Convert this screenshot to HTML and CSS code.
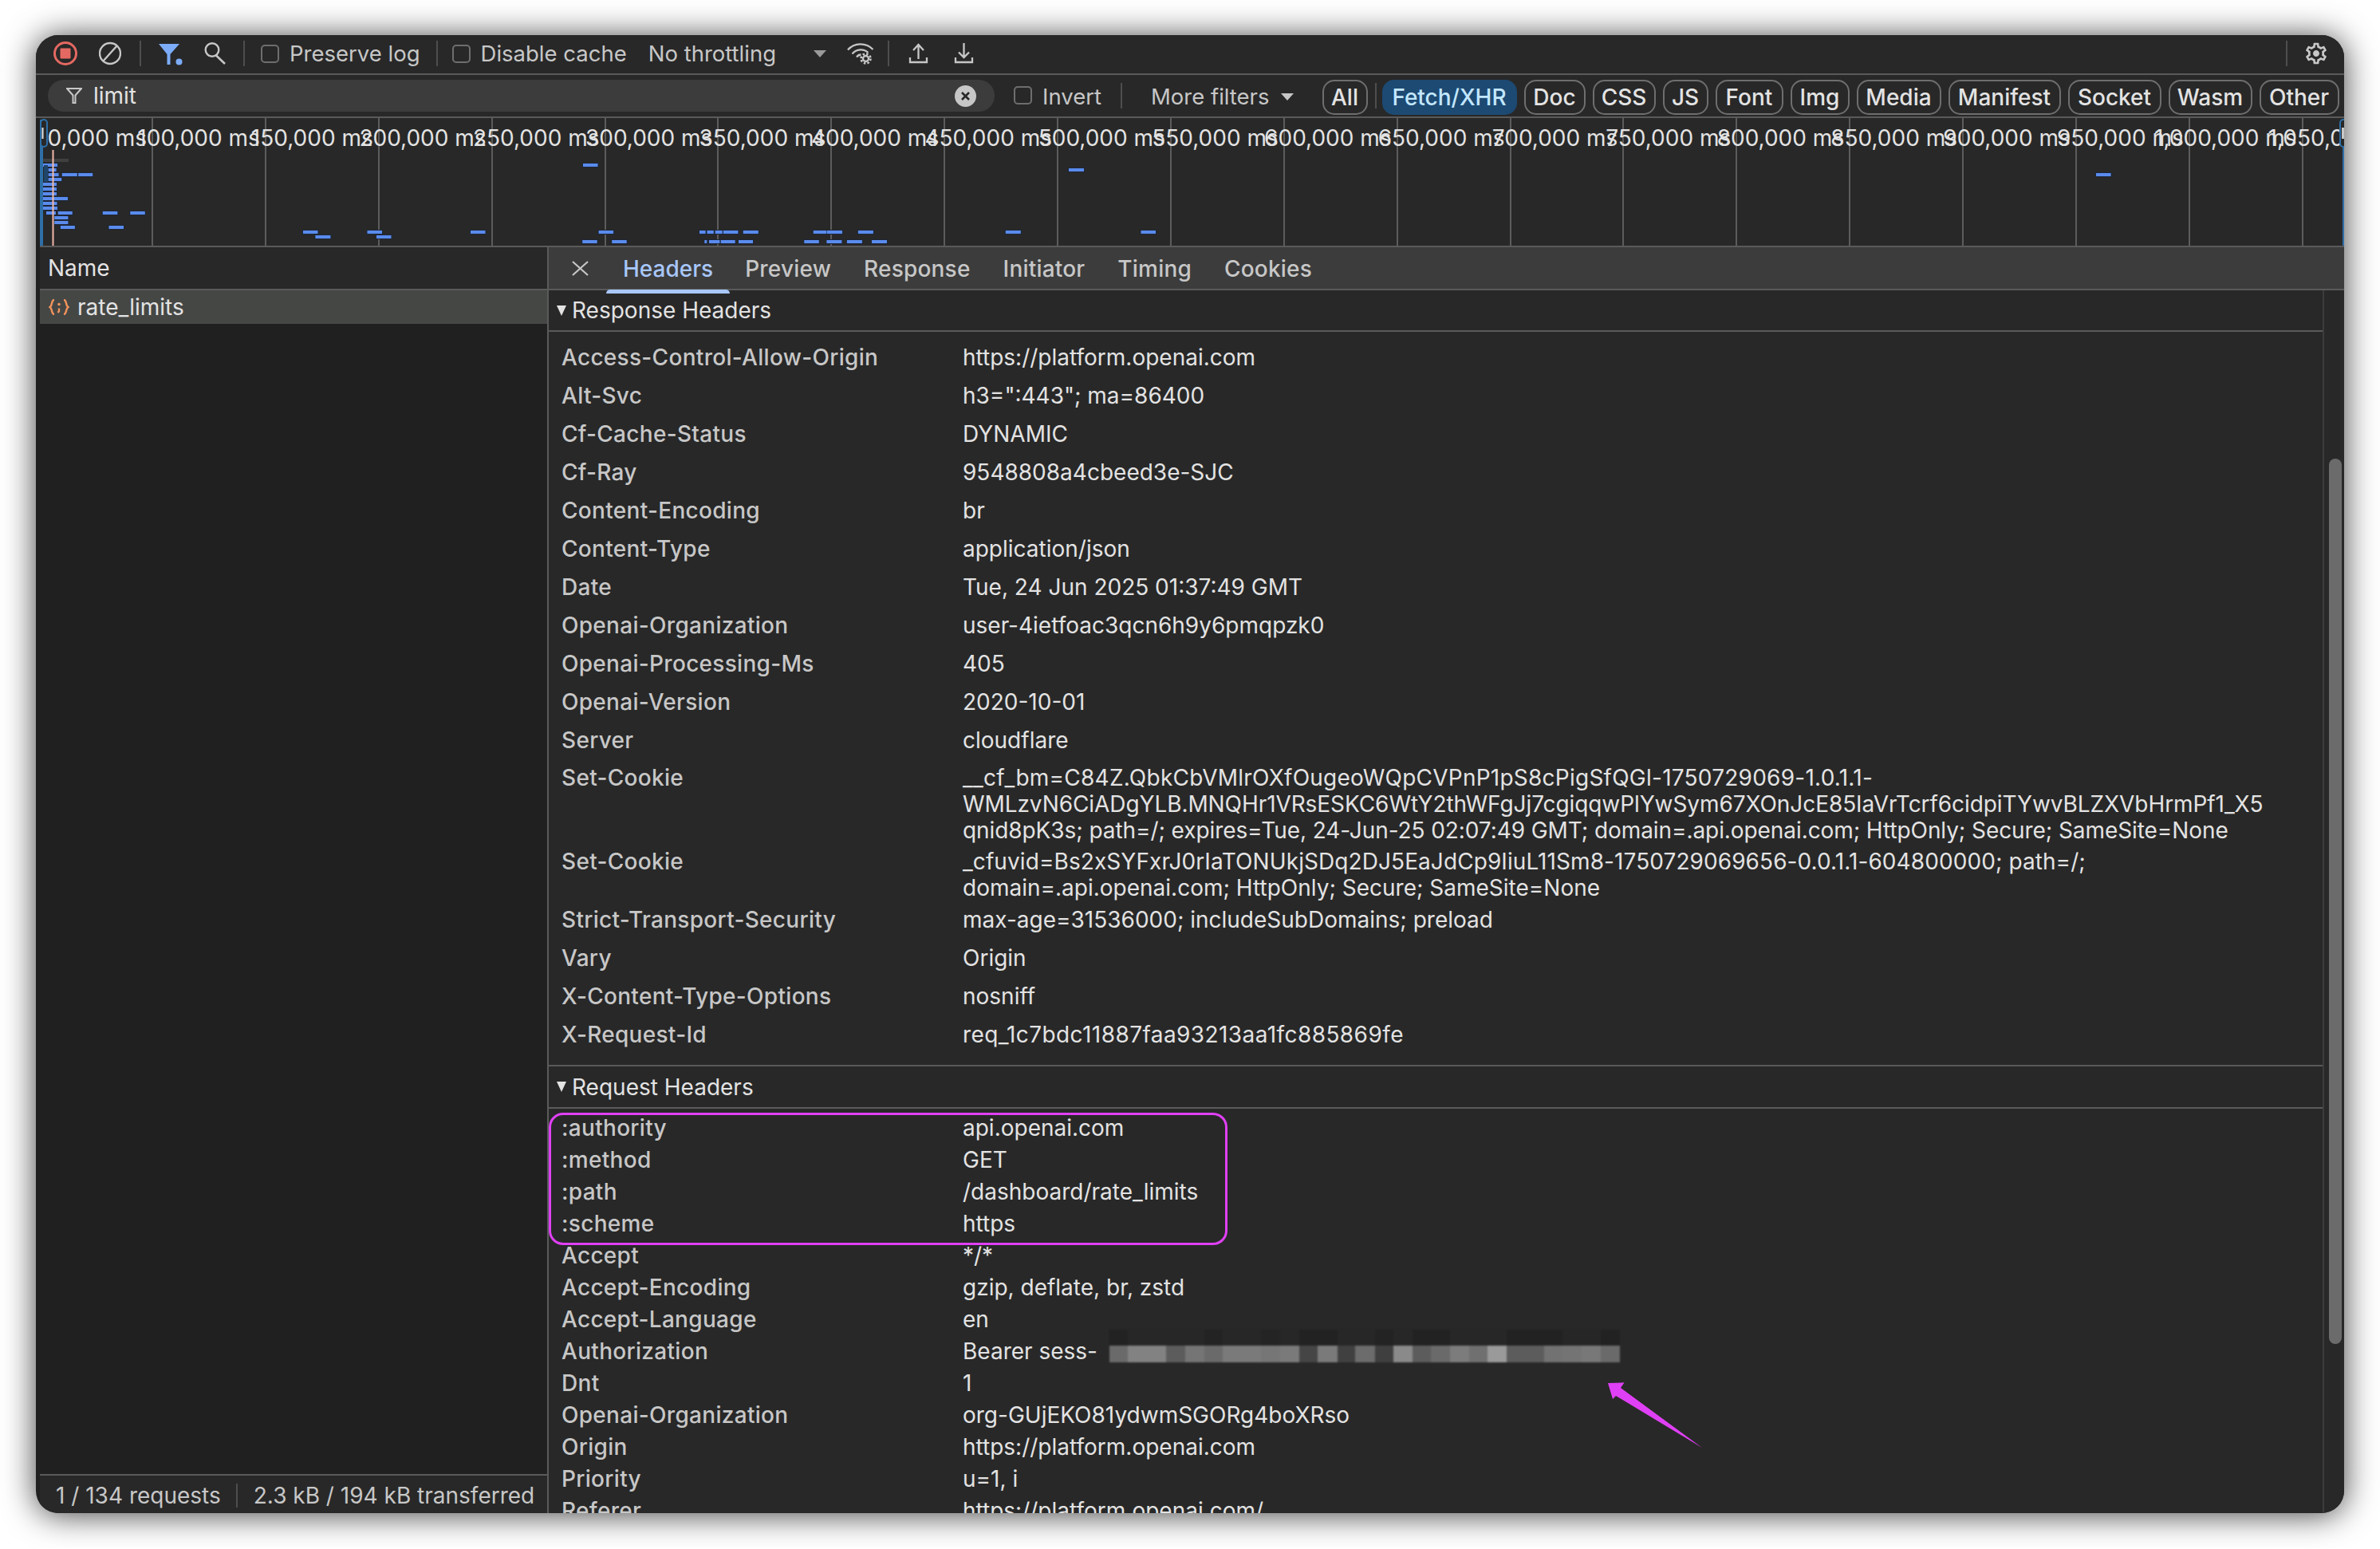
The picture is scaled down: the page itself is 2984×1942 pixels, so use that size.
FILE: index.html
```html
<!DOCTYPE html>
<html lang="en">
<head>
<meta charset="utf-8">
<title>Network</title>
<link rel="stylesheet" href="styles.css">
</head>
<body>
<div class="window">
  <div class="toolbar">
    <svg class="ic record" width="30" height="30" viewBox="0 0 30 30"><circle cx="15" cy="15" r="13.5" fill="none" stroke="#e46962" stroke-width="3"/><rect x="8.5" y="8.5" width="13" height="13" rx="1" fill="#e46962"/></svg>
    <svg class="ic clear" width="28" height="30" viewBox="0 0 28 30"><circle cx="14" cy="15" r="13" fill="none" stroke="#c7c7c7" stroke-width="2.4"/><path d="M5 25 L23 5" stroke="#c7c7c7" stroke-width="2.4"/></svg>
    <span class="sep sep-a"></span>
    <svg class="ic funnel" width="30" height="28" viewBox="0 0 30 28"><path d="M0 0H26L14.5 13V26H10.5V13Z" fill="#7cacf8"/><circle cx="25.5" cy="22.5" r="4" fill="#7cacf8"/></svg>
    <svg class="ic search" width="28" height="28" viewBox="0 0 28 28"><circle cx="11" cy="9.5" r="8.3" fill="none" stroke="#c7c7c7" stroke-width="2.4"/><path d="M16 16.5 L27 27" stroke="#c7c7c7" stroke-width="2.6"/></svg>
    <span class="sep sep-b"></span>
    <span class="check c1"></span><span class="lbl l-preserve">Preserve log</span>
    <span class="sep sep-c"></span>
    <span class="check c1"></span><span class="lbl l-disable">Disable cache</span>
    <span class="lbl l-throttle">No throttling</span>
    <span class="tri t-throttle"></span>
    <svg class="ic wifi" width="34" height="28" viewBox="0 0 34 28"><g fill="none" stroke="#c7c7c7" stroke-width="2.3"><path d="M1 9.5C9 0 24 0 32.500 9"/><path d="M6.500 14.500C12 8 21 8 26.500 13"/><path d="M12 18.500C13.500 16.500 15.500 15.500 17.500 15.500"/><circle cx="23.500" cy="20.500" r="3.500"/><circle cx="23.500" cy="20.500" r="6" stroke-width="2.6" stroke-dasharray="2.500 2.200"/></g></svg>
    <span class="sep sep-d"></span>
    <svg class="ic upload" width="25" height="26" viewBox="0 0 25 26"><path d="M12.500 20V2M6 9L12.500 2L19 9M2 18V24H23V18" fill="none" stroke="#c7c7c7" stroke-width="2.3"/></svg>
    <svg class="ic download" width="25" height="26" viewBox="0 0 25 26"><path d="M12.500 0V18M6 11.500L12.500 18L19 11.500M2 18V24H23V18" fill="none" stroke="#c7c7c7" stroke-width="2.3"/></svg>
    <span class="grow"></span>
    <span class="sep sep-e"></span>
    <svg class="ic settings" width="32" height="32" viewBox="0 0 24 24"><path fill="#c7c7c7" d="M19.430 12.980c.04-.32.07-.64.07-.98 0-.34-.03-.66-.07-.98l2.110-1.650c.19-.15.24-.42.12-.64l-2-3.460c-.09-.16-.26-.25-.44-.25-.06 0-.12.01-.17.03l-2.490 1c-.52-.4-1.080-.73-1.690-.98l-.38-2.650C14.460 2.180 14.250 2 14 2h-4c-.25 0-.46.18-.49.42l-.38 2.650c-.61.25-1.170.59-1.690.98l-2.490-1c-.06-.02-.12-.03-.18-.03-.17 0-.34.09-.43.25l-2 3.460c-.13.22-.07.49.12.64l2.110 1.650c-.04.32-.07.65-.07.98 0 .33.03.66.07.98l-2.110 1.650c-.19.15-.24.42-.12.64l2 3.460c.09.16.26.25.44.25.06 0 .12-.01.17-.03l2.490-1c.52.4 1.080.73 1.690.98l.38 2.650c.03.24.24.42.49.42h4c.25 0 .46-.18.49-.42l.38-2.650c.61-.25 1.170-.59 1.690-.98l2.490 1c.06.02.12.03.18.03.17 0 .34-.09.43-.25l2-3.460c.12-.22.07-.49-.12-.64l-2.110-1.650zm-1.980-1.710c.04.31.05.52.05.73 0 .21-.02.43-.05.73l-.14 1.130.89.7 1.080.84-.7 1.210-1.270-.51-1.040-.42-.9.68c-.43.32-.84.56-1.250.73l-1.060.43-.16 1.130-.2 1.350h-1.400l-.19-1.350-.16-1.130-1.060-.43c-.43-.18-.83-.41-1.230-.71l-.91-.7-1.060.43-1.270.51-.7-1.210 1.080-.84.89-.7-.14-1.130c-.03-.31-.05-.54-.05-.74s.02-.43.05-.73l.14-1.130-.89-.7-1.080-.84.7-1.210 1.270.51 1.040.42.9-.68c.43-.32.84-.56 1.250-.73l1.060-.43.16-1.130.2-1.350h1.390l.19 1.350.16 1.130 1.060.43c.43.18.83.41 1.230.71l.91.7 1.060-.43 1.270-.51.7 1.210-1.070.85-.89.7.14 1.130zM12 9c-1.660 0-3 1.340-3 3s1.340 3 3 3 3-1.340 3-3-1.340-3-3-3z"/></svg>
  </div>

  <div class="filterbar">
    <div class="filterinput">
      <svg class="ic" width="20" height="20" viewBox="0 0 20 20"><path d="M1 1H19L11.500 9.500V19H8.500V9.500Z" fill="none" stroke="#c7c7c7" stroke-width="2"/></svg>
      <span class="query">limit</span>
      <span class="grow"></span>
      <svg class="ic" width="27" height="27" viewBox="0 0 27 27"><circle cx="13.500" cy="13.500" r="13.500" fill="#c7c7c7"/><path d="M9 9L18 18M18 9L9 18" stroke="#282828" stroke-width="2.600"/></svg>
    </div>
    <span class="check c2"></span><span class="lbl l-invert">Invert</span>
    <span class="sep sep-f"></span>
    <span class="lbl l-more">More filters</span>
    <span class="tri t-more"></span>
    <span class="pill p-all">All</span>
    <span class="sep sep-g"></span>
    <span class="pill active p-fetch">Fetch/XHR</span>
    <span class="pill p-doc">Doc</span>
    <span class="pill p-css">CSS</span>
    <span class="pill p-js">JS</span>
    <span class="pill p-font">Font</span>
    <span class="pill p-img">Img</span>
    <span class="pill p-media">Media</span>
    <span class="pill p-manifest">Manifest</span>
    <span class="pill p-socket">Socket</span>
    <span class="pill p-wasm">Wasm</span>
    <span class="pill p-other">Other</span>
  </div>

  <div class="timeline">
    <div class="ticks">
      <div class="tick first"><span>50,000 ms</span></div>
      <div class="tick"><span>100,000 ms</span></div>
      <div class="tick"><span>150,000 ms</span></div>
      <div class="tick"><span>200,000 ms</span></div>
      <div class="tick"><span>250,000 ms</span></div>
      <div class="tick"><span>300,000 ms</span></div>
      <div class="tick"><span>350,000 ms</span></div>
      <div class="tick"><span>400,000 ms</span></div>
      <div class="tick"><span>450,000 ms</span></div>
      <div class="tick"><span>500,000 ms</span></div>
      <div class="tick"><span>550,000 ms</span></div>
      <div class="tick"><span>600,000 ms</span></div>
      <div class="tick"><span>650,000 ms</span></div>
      <div class="tick"><span>700,000 ms</span></div>
      <div class="tick"><span>750,000 ms</span></div>
      <div class="tick"><span>800,000 ms</span></div>
      <div class="tick"><span>850,000 ms</span></div>
      <div class="tick"><span>900,000 ms</span></div>
      <div class="tick"><span>950,000 ms</span></div>
      <div class="tick"><span>1,000,000 ms</span></div>
      <div class="tick"><span>1,050,000 ms</span></div>
    </div>
    <svg class="overview" width="2889" height="160" viewBox="50 148 2889 160">
      <rect x="54" y="199" width="32" height="4" fill="#404040"/>
      <g fill="#5a8bed" stroke="#1d2636" stroke-width="2" paint-order="stroke">
        <path d="M54 205h18v4h-18zM731 205h18.500v4h-18.500zM60.600 211h10v4h-10zM1340 211h19v4h-19zM60.600 217h13v4h-13zM77.800 217h19v4h-19zM98.200 217h18v4h-18zM2628 217h18.600v4h-18.600zM60.600 223h16.600v4h-16.600zM54 229h17v4h-17zM54 235h17v4h-17zM54 241h17v4h-17zM54 247h31v4h-31zM54 253h17.500v4h-17.500zM54 259h18v4h-18z"/>
        <path d="M58 265h12v4h-12zM72.700 265h18v4h-18zM128.800 265h18.500v4h-18.500zM163.300 265h18.500v4h-18.500zM68.200 271h17.200v4h-17.200zM68.200 277h17.200v4h-17.200zM75.900 283h18v4h-18zM136.500 283h18.500v4h-18.500z"/>
        <path d="M380 289h18.500v4h-18.500zM460.500 289h18.500v4h-18.500zM590 289h18.500v4h-18.500zM750.600 289h18.500v4h-18.500zM877 289h7.600v4h-7.600zM886.500 289h8.300v4h-8.300zM896.700 289h9v4h-9zM906.900 289h18.500v4h-18.500zM931.800 289h19v4h-19zM1019.800 289h16.600v4h-16.600zM1037 289h19v4h-19zM1075.900 289h19v4h-19zM1260.800 289h19v4h-19zM1430.500 289h18.500v4h-18.500z"/>
        <path d="M395.400 295h19v4h-19zM472 295h18.500v4h-18.500zM730.200 301h18.500v4h-18.500zM767.200 301h18.500v4h-18.500zM883.300 301h3v4h-3zM889 301h13.400v4h-13.400zM903.700 301h18v4h-18zM926 301h18v4h-18zM1008.300 301h18.500v4h-18.500zM1036.400 301h19v4h-19zM1061.900 301h19v4h-19zM1093 301h19v4h-19z"/>
      </g>
      <rect x="55" y="207" width="5" height="21" fill="#20456a"/>
      <rect x="65.500" y="188" width="2" height="120" fill="#f2b8a8"/>
      <rect x="50" y="150" width="4" height="158" fill="#2e6fa8"/>
      <rect x="2937" y="150" width="2" height="158" fill="#2e6fa8"/>
      <rect x="51" y="150" width="8" height="34" rx="4" fill="#282828" stroke="#2e6fa8" stroke-width="2"/>
      <rect x="52.500" y="160" width="2" height="14" fill="#e3e3e3"/>
      <rect x="2934" y="150" width="8" height="34" rx="4" fill="#282828" stroke="#2e6fa8" stroke-width="2"/>
      <rect x="2936" y="160" width="3" height="14" fill="#c7c7c7"/>
    </svg>
  </div>

  <div class="split">
    <aside class="list">
      <div class="listhead">Name</div>
      <div class="listrow">
        <svg class="ic" width="26" height="20" viewBox="0 0 26 20"><g fill="none" stroke="#f0935c" stroke-width="2.400"><path d="M7 1C3 1 5 8 1.500 10C5 12 3 19 7 19"/><path d="M19 1C23 1 21 8 24.500 10C21 12 23 19 19 19"/></g><circle cx="13" cy="6.500" r="1.800" fill="#f0935c"/><path d="M13 11.500V15L11.500 17" fill="none" stroke="#f0935c" stroke-width="2.400"/></svg>
        <span>rate_limits</span>
      </div>
      <div class="listfill"></div>
      <div class="status"><span>1 / 134 requests</span><span class="sep sep-s"></span><span class="s2">2.3 kB / 194 kB transferred</span></div>
    </aside>
    <section class="detail">
      <div class="tabs">
        <svg class="ic tabx" width="21" height="19" viewBox="0 0 21 19"><path d="M1 1L20 18M20 1L1 18" stroke="#c7c7c7" stroke-width="2.200"/></svg>
        <span class="tab sel">Headers</span>
        <span class="tab">Preview</span>
        <span class="tab">Response</span>
        <span class="tab">Initiator</span>
        <span class="tab">Timing</span>
        <span class="tab">Cookies</span>
      </div>
      <div class="panes">
        <div class="content">
          <div class="sec-head"><span class="sec-tri"></span>Response Headers</div>
          <div class="rows resp">
            <div class="row"><span class="hn">Access-Control-Allow-Origin</span><span class="hv">https://platform.openai.com</span></div>
            <div class="row"><span class="hn">Alt-Svc</span><span class="hv">h3=":443"; ma=86400</span></div>
            <div class="row"><span class="hn">Cf-Cache-Status</span><span class="hv">DYNAMIC</span></div>
            <div class="row"><span class="hn">Cf-Ray</span><span class="hv">9548808a4cbeed3e-SJC</span></div>
            <div class="row"><span class="hn">Content-Encoding</span><span class="hv">br</span></div>
            <div class="row"><span class="hn">Content-Type</span><span class="hv">application/json</span></div>
            <div class="row"><span class="hn">Date</span><span class="hv">Tue, 24 Jun 2025 01:37:49 GMT</span></div>
            <div class="row"><span class="hn">Openai-Organization</span><span class="hv">user-4ietfoac3qcn6h9y6pmqpzk0</span></div>
            <div class="row"><span class="hn">Openai-Processing-Ms</span><span class="hv">405</span></div>
            <div class="row"><span class="hn">Openai-Version</span><span class="hv">2020-10-01</span></div>
            <div class="row"><span class="hn">Server</span><span class="hv">cloudflare</span></div>
            <div class="row multi three"><span class="hn">Set-Cookie</span><span class="hv"><span class="t-a">__cf_bm=C84Z.QbkCbVMlrOXfOugeoWQpCVPnP1pS8cPigSfQGl-1750729069-1.0.1.1-</span><br><span class="t-b">WMLzvN6CiADgYLB.MNQHr1VRsESKC6WtY2thWFgJj7cgiqqwPlYwSym67XOnJcE85IaVrTcrf6cidpiTYwvBLZXVbHrmPf1_X5</span><br><span class="t-b">qnid8pK3s; path=/; expires=Tue, 24-Jun-25 02:07:49 GMT; domain=.api.openai.com; HttpOnly; Secure; SameSite=None</span></span></div>
            <div class="row multi"><span class="hn">Set-Cookie</span><span class="hv"><span class="t-c">_cfuvid=Bs2xSYFxrJ0rIaTONUkjSDq2DJ5EaJdCp9IiuL11Sm8-1750729069656-0.0.1.1-604800000; path=/;</span><br>domain=.api.openai.com; HttpOnly; Secure; SameSite=None</span></div>
            <div class="row"><span class="hn">Strict-Transport-Security</span><span class="hv">max-age=31536000; includeSubDomains; preload</span></div>
            <div class="row"><span class="hn">Vary</span><span class="hv">Origin</span></div>
            <div class="row"><span class="hn">X-Content-Type-Options</span><span class="hv">nosniff</span></div>
            <div class="row"><span class="hn">X-Request-Id</span><span class="hv t-d">req_1c7bdc11887faa93213aa1fc885869fe</span></div>
          </div>
          <div class="sec-head req"><span class="sec-tri"></span>Request Headers</div>
          <div class="rows reqrows">
            <div class="highlight">
              <div class="row"><span class="hn">:authority</span><span class="hv">api.openai.com</span></div>
              <div class="row"><span class="hn">:method</span><span class="hv">GET</span></div>
              <div class="row"><span class="hn">:path</span><span class="hv">/dashboard/rate_limits</span></div>
              <div class="row"><span class="hn">:scheme</span><span class="hv">https</span></div>
            </div>
            <div class="row"><span class="hn">Accept</span><span class="hv">*/*</span></div>
            <div class="row"><span class="hn">Accept-Encoding</span><span class="hv">gzip, deflate, br, zstd</span></div>
            <div class="row"><span class="hn">Accept-Language</span><span class="hv">en</span></div>
            <div class="row"><span class="hn">Authorization</span><span class="hv">Bearer sess-<span class="redact"></span></span></div>
            <div class="row"><span class="hn">Dnt</span><span class="hv">1</span></div>
            <div class="row"><span class="hn">Openai-Organization</span><span class="hv">org-GUjEKO81ydwmSGORg4boXRso</span></div>
            <div class="row"><span class="hn">Origin</span><span class="hv">https://platform.openai.com</span></div>
            <div class="row"><span class="hn">Priority</span><span class="hv">u=1, i</span></div>
            <div class="row"><span class="hn">Referer</span><span class="hv">https://platform.openai.com/</span></div>
          </div>
        </div>
        <div class="scrolltrack"><div class="thumb"></div></div>
      </div>
    </section>
  </div>
  <svg class="arrow" width="122" height="84" viewBox="2014 1732 122 84"><path d="M2016 1734L2036.500 1733.300L2032 1740L2134 1815L2026 1750L2022 1754Z" fill="#e040f5"/></svg>
</div>
</body>
</html>
```

FILE: styles.css
```css
* { box-sizing: border-box; }
html { background: #fff; }
body { margin: 0; padding: 44px 45px; font-family: "Inter", "Liberation Sans", sans-serif; font-size: 28px; color: #e3e3e3; }
.window {
  position: relative; width: 2894px; height: 1853px; padding-left: 5px;
  background: #202020; border-radius: 28px; overflow: hidden;
  display: flex; flex-direction: column;
  box-shadow: 0 2px 40px rgba(0,0,0,.75);
}
.ic { display: block; flex: none; }
.grow { flex: 1; }
.lbl { color: #c7c7c7; white-space: nowrap; flex: none; font-size: 27.500px; }

.toolbar {
  height: 50px; flex: none; display: flex; align-items: center;
  background: #282828; border-bottom: 2px solid #5a5a5a; margin-left: -5px; padding-left: 5px;
  padding-bottom: 2px;
}
.sep { display: block; width: 2px; height: 32px; background: #4e4e4e; flex: none; }
.record { margin-left: 17px; }
.clear { margin-left: 27px; }
.sep-a { margin-left: 23px; }
.funnel { margin-left: 22px; margin-top: 4px; }
.search { margin-left: 26px; }
.sep-b { margin-left: 22px; }
.check { display: block; width: 23px; height: 23px; border: 2.500px solid #6e6e6e; border-radius: 5px; flex: none; }
.toolbar .check { margin-left: 20px; }
.toolbar .sep-c + .check { margin-left: 18px; }
.l-preserve, .l-disable { margin-left: 13px; }
.sep-c { margin-left: 20px; }
.l-throttle { margin-left: 27px; }
.tri { display: block; width: 0; height: 0; border-left: 8px solid transparent; border-right: 8px solid transparent; border-top: 9px solid #9a9a9a; flex: none; }
.t-throttle { margin-left: 47px; }
.wifi { margin-left: 26px; }
.sep-d { margin-left: 17px; }
.upload { margin-left: 24px; }
.download { margin-left: 32px; }
.sep-e { margin-right: 20px; }
.settings { margin-right: 19px; }

.filterbar {
  height: 54px; flex: none; display: flex; align-items: flex-start;
  background: #282828; border-bottom: 2px solid #5a5a5a; padding-top: 6px; margin-left: -5px; padding-left: 5px;
}
.filterinput {
  width: 1187px; height: 40px; margin-left: 10px; padding: 0 23px 0 23px; flex: none;
  display: flex; align-items: center; background: #3c3c3c; border-radius: 20px;
}
.query { margin-left: 14px; color: #e3e3e3; }
.c2 { margin-left: 24px; margin-top: 8px; }
.l-invert { margin-left: 13px; margin-top: 4px; }
.sep-f { margin-left: 24px; margin-top: 4px; }
.l-more { margin-left: 36px; margin-top: 4px; }
.t-more { margin-left: 14px; margin-top: 17px; border-top-color: #c7c7c7; }
.pill {
  height: 44px; flex: none; display: flex; align-items: center; justify-content: center;
  border: 2px solid #6e6e6e; border-radius: 15px; margin-left: 9px; font-weight: 500; color: #e3e3e3;
}
.active { background: #1d4a73; border-color: #1d4a73; color: #c2e7ff; }
.p-all { width: 57px; margin-left: 36px; }
.sep-g { margin-left: 9px; margin-top: 4px; }
.p-fetch { width: 169px; margin-left: 7px; }
.p-doc { width: 77px; }
.p-css { width: 79px; }
.p-js { width: 57px; }
.p-font { width: 85px; }
.p-img { width: 74px; }
.p-media { width: 106px; }
.p-manifest { width: 141px; }
.p-socket { width: 117px; }
.p-wasm { width: 105px; }
.p-other { width: 100px; }

.timeline { position: relative; height: 162px; flex: none; background: #282828; border-bottom: 2px solid #5a5a5a; overflow: hidden; }
.ticks { display: flex; height: 160px; }
.tick {
  flex: none; width: 141.880px; height: 160px; display: flex; justify-content: flex-end;
  border-right: 2px solid #5c5c5c; padding-right: 6px; line-height: 50px; white-space: nowrap; color: #e3e3e3;
}
.tick span { flex: none; }
.tick.first { margin-left: 10px; width: 132px; overflow: hidden; }
.overview { position: absolute; left: 0; top: 0; }

.split { flex: 1; min-height: 0; display: flex; background: #282828; }
.list { width: 638px; flex: none; display: flex; flex-direction: column; border-right: 2px solid #5a5a5a; }
.listhead { height: 54px; flex: none; padding-left: 10px; display: flex; align-items: center; border-bottom: 2px solid #5a5a5a; padding-bottom: 1px; }
.listrow { height: 42px; flex: none; display: flex; align-items: center; background: #454745; padding-left: 11px; gap: 10px; }
.listfill { flex: 1; background: #202020; }
.status { height: 49px; flex: none; display: flex; align-items: center; padding: 2px 0 0 20px; border-top: 2px solid #5a5a5a; color: #c7c7c7; white-space: nowrap; }
.sep-s { margin-left: 19px; height: 30px; }
.s2 { margin-left: 20px; }

.detail { flex: 1; min-width: 0; display: flex; flex-direction: column; }
.tabs { height: 54px; flex: none; display: flex; align-items: center; background: #3c3c3c; border-bottom: 2px solid #5a5a5a; padding-top: 2px; }
.tabx { margin-left: 29px; margin-right: 43px; margin-top: -2px; }
.tab { margin-right: 41px; color: #c7c7c7; white-space: nowrap; position: relative; font-weight: 500; letter-spacing: .2px; }
.tab.sel { color: #a8c7fa; letter-spacing: 0; margin-right: 40px; }
.tab.sel::after { content: ""; position: absolute; left: -21px; right: -21px; bottom: -14px; height: 5px; background: #a8c7fa; border-radius: 5px 5px 0 0; }
.panes { flex: 1; min-height: 0; display: flex; }
.content { flex: 1; min-width: 0; overflow: hidden; }
.scrolltrack { width: 27px; flex: none; border-left: 2px solid #3c3c3c; padding: 211px 3px 0 6px; }
.thumb { width: 16px; height: 1110px; background: #6b6b6b; border-radius: 8px; }

.sec-head { height: 52px; display: flex; align-items: center; padding-left: 10px; border-bottom: 2px solid #5a5a5a; color: #e3e3e3; }
.sec-tri { width: 0; height: 0; border-left: 6.500px solid transparent; border-right: 6.500px solid transparent; border-top: 13px solid #e3e3e3; margin-right: 7px; }
.sec-head.req { height: 55px; border-top: 2px solid #5a5a5a; }
.rows { padding-top: 8px; }
.resp { padding-bottom: 14px; }
.reqrows { padding-top: 4px; }
.row { display: flex; height: 48px; align-items: center; padding-left: 16px; line-height: 33px; }
.row.multi { height: 65px; align-items: flex-start; }
.row.three { height: 112px; padding-top: 7px; }
.reqrows .row { height: 40px; }
.hn { width: 503px; flex: none; color: #c7c7c7; font-weight: 500; letter-spacing: .3px; white-space: nowrap; }
.hv { color: #e3e3e3; white-space: nowrap; }
.t-a { letter-spacing: .24px; }
.t-b { letter-spacing: -.08px; }
.t-c { letter-spacing: .08px; }
.t-d { letter-spacing: .42px; }
.highlight { position: relative; }
.highlight::after { content: ""; position: absolute; left: 0; top: 1px; width: 845px; height: 160px; border: 3px solid #e040f5; border-radius: 18px; }
.redact { display: inline-block; position: relative; width: 640px; height: 21px; margin-left: 15px; vertical-align: -4px; filter: blur(.8px);
  background: linear-gradient(90deg,#6a6a6a 0 23.500px,#828282 0 71px,#5c5c5c 0 95px,#757575 0 119px,#6a6a6a 0 142px,#7a7a7a 0 190px,#767676 0 214px,#7a7a7a 0 238px,#454545 0 261px,#7a7a7a 0 286px,#404040 0 308px,#6c6c6c 0 333px,#3f3f3f 0 356px,#8a8a8a 0 380px,#5c5c5c 0 403px,#6a6a6a 0 427px,#7c7c7c 0 451px,#707070 0 474px,#9a9a9a 0 498px,#5c5c5c 0 545px,#727272 0 568px,#747474 0 592px,#787878 0 616px,#6a6a6a 0 640px);
}
.redact::before { content: ""; position: absolute; left: 0; right: 0; top: -20px; height: 20px;
  background: linear-gradient(90deg,#222 0 23.500px,#272727 0 119px,#232323 0 142px,#272727 0 190px,#242424 0 214px,#272727 0 238px,#222 0 286px,#272727 0 333px,#232323 0 356px,#272727 0 380px,#222 0 427px,#272727 0 498px,#222 0 568px,#262626 0 616px,#222 0 640px);
}
.arrow { position: absolute; left: 1969px; top: 1688px; }
```
